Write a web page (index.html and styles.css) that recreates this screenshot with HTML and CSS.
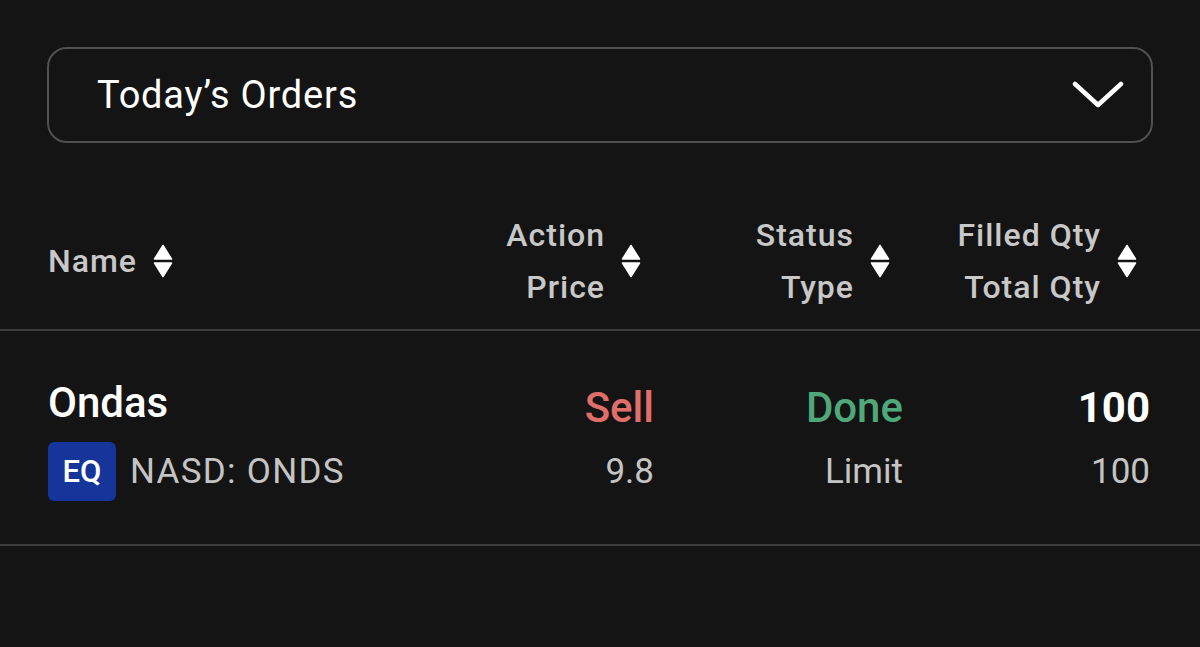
FILE: index.html
```html
<!DOCTYPE html>
<html lang="en">

<head>
    <meta charset="UTF-8">
    <meta name="viewport" content="width=device-width, initial-scale=1.0">
    <title>Today's Orders</title>
    <link rel="stylesheet" href="styles.css">
</head>

<body>
    <div class="page">
        <div class="select">
            <span class="select-label">Today’s Orders</span>
            <svg class="chevron" width="52" height="28" viewBox="0 0 52 28">
                <path d="M3 3 L26 24 L49 3" fill="none" stroke="#fff" stroke-width="4.5" stroke-linecap="round" stroke-linejoin="round"/>
            </svg>
        </div>
    </div>

    <div class="table">
        <div class="row head">
            <div class="cell name-col">
                <span class="head-text">Name</span>
                <svg class="sort" width="20" height="34" viewBox="0 0 20 34">
                    <path d="M10 1.5 L18.5 15 L1.5 15 Z" fill="#fff" stroke="#fff" stroke-width="1.5" stroke-linejoin="round"/>
                    <path d="M1.5 19 L18.5 19 L10 32.5 Z" fill="#fff" stroke="#fff" stroke-width="1.5" stroke-linejoin="round"/>
                </svg>
            </div>
            <div class="cell num-col">
                <span class="head-text">Action<br>Price</span>
                <svg class="sort" width="20" height="34" viewBox="0 0 20 34">
                    <path d="M10 1.5 L18.5 15 L1.5 15 Z" fill="#fff" stroke="#fff" stroke-width="1.5" stroke-linejoin="round"/>
                    <path d="M1.5 19 L18.5 19 L10 32.5 Z" fill="#fff" stroke="#fff" stroke-width="1.5" stroke-linejoin="round"/>
                </svg>
            </div>
            <div class="cell num-col">
                <span class="head-text">Status<br>Type</span>
                <svg class="sort" width="20" height="34" viewBox="0 0 20 34">
                    <path d="M10 1.5 L18.5 15 L1.5 15 Z" fill="#fff" stroke="#fff" stroke-width="1.5" stroke-linejoin="round"/>
                    <path d="M1.5 19 L18.5 19 L10 32.5 Z" fill="#fff" stroke="#fff" stroke-width="1.5" stroke-linejoin="round"/>
                </svg>
            </div>
            <div class="cell num-col">
                <span class="head-text">Filled Qty<br>Total Qty</span>
                <svg class="sort" width="20" height="34" viewBox="0 0 20 34">
                    <path d="M10 1.5 L18.5 15 L1.5 15 Z" fill="#fff" stroke="#fff" stroke-width="1.5" stroke-linejoin="round"/>
                    <path d="M1.5 19 L18.5 19 L10 32.5 Z" fill="#fff" stroke="#fff" stroke-width="1.5" stroke-linejoin="round"/>
                </svg>
            </div>
        </div>

        <div class="row order">
            <div class="cell name-col stack">
                <div class="stock-name">Ondas</div>
                <div class="stock-code">
                    <span class="badge">EQ</span>
                    <span class="exchange">NASD: ONDS</span>
                </div>
            </div>
            <div class="cell num-col stack">
                <div class="main sell">Sell</div>
                <div class="sub">9.8</div>
            </div>
            <div class="cell num-col stack">
                <div class="main done">Done</div>
                <div class="sub">Limit</div>
            </div>
            <div class="cell num-col stack">
                <div class="main qty">100</div>
                <div class="sub">100</div>
            </div>
        </div>
    </div>
</body>

</html>
```

FILE: styles.css
```css
body {
    margin: 0;
    padding: 0;
    background-color: #141414;
    color: #fff;
    font-family: Roboto, "Noto Sans", sans-serif;
}

.page {
    padding: 47px 47px 0 47px;
}

.select {
    height: 92px;
    border: 2px solid #505050;
    border-radius: 20px;
    display: flex;
    align-items: center;
    justify-content: space-between;
    padding: 0 27px 0 48px;
}

.select-label {
    font-size: 38px;
    letter-spacing: 0.8px;
    color: #fff;
}

.chevron {
    display: block;
}

.table {
    margin-top: 66px;
}

.row {
    display: grid;
    grid-template-columns: 1fr 249px 249px 247px;
    padding: 0 50px 0 48px;
}

/* header row */
.head {
    height: 104px;
    padding-bottom: 16px;
    border-bottom: 2px solid #3c3c3c;
}

.cell {
    display: flex;
    align-items: center;
}

.num-col {
    justify-content: flex-end;
}

.head .num-col {
    padding-right: 13px;
}

.head-text {
    font-size: 32px;
    line-height: 52px;
    font-weight: 500;
    letter-spacing: 1px;
    color: #c8c8c8;
    text-align: right;
}

.sort {
    display: block;
    margin-left: 16px;
}

/* order row */
.order {
    height: 165px;
    padding-top: 48px;
    border-bottom: 2px solid #3c3c3c;
    align-items: start;
}

.stack {
    flex-direction: column;
    align-items: flex-end;
}

.name-col.stack {
    align-items: flex-start;
}

.stock-name {
    font-size: 42px;
    font-weight: 500;
    line-height: 48px;
    color: #fff;
}

.stock-code {
    display: flex;
    align-items: center;
    height: 59px;
    margin-top: 15px;
}

.badge {
    background-color: #15359a;
    color: #fff;
    font-size: 31px;
    font-weight: 500;
    border-radius: 6px;
    width: 68px;
    height: 59px;
    display: flex;
    align-items: center;
    justify-content: center;
}

.exchange {
    margin-left: 14px;
    font-size: 35px;
    letter-spacing: 1.3px;
    color: #c4c4c4;
}

.main {
    font-size: 42px;
    font-weight: 500;
    line-height: 48px;
    margin-top: 5px;
}

.sub {
    font-size: 35px;
    line-height: 59px;
    margin-top: 10px;
    color: #c4c4c4;
}

.sell {
    color: #e06f6a;
}

.done {
    color: #4fa87a;
}

.qty {
    color: #fff;
    font-weight: 700;
}
```
